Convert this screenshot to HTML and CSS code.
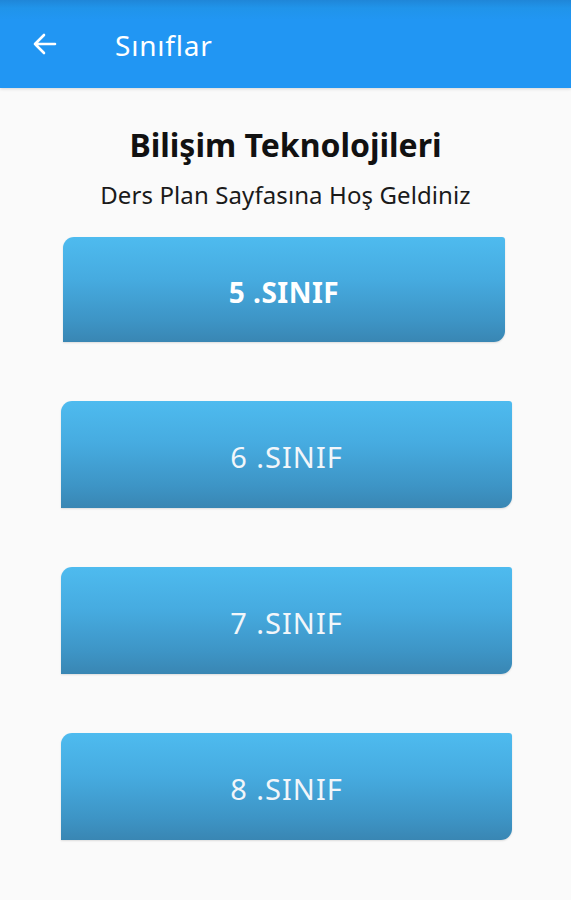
FILE: index.html
```html
<!DOCTYPE html>
<html lang="tr">
<head>
<meta charset="utf-8">
<link rel="stylesheet" href="styles.css">
</head>
<body>
<header class="appbar">
  <svg class="back" width="26" height="24" viewBox="0 0 26 24"><path d="M24 12H4M13 3L4 12l9 9" fill="none" stroke="#fff" stroke-width="2.6" stroke-linecap="round" stroke-linejoin="round"/></svg>
  <span class="appbar-title">Sınıflar</span>
</header>
<main class="content">
  <h1 class="title">Bilişim Teknolojileri</h1>
  <p class="subtitle">Ders Plan Sayfasına Hoş Geldiniz</p>
  <div class="list">
    <div class="btn btn-first">5 .SINIF</div>
    <div class="btn">6 .SINIF</div>
    <div class="btn">7 .SINIF</div>
    <div class="btn">8 .SINIF</div>
  </div>
</main>
</body>
</html>
```
FILE: styles.css
```css
html, body { margin: 0; padding: 0; }
body {
  width: 571px;
  height: 900px;
  background: #fafafa;
  font-family: "Noto Sans", "Open Sans", sans-serif;
  overflow: hidden;
}
.appbar {
  height: 88px;
  background: linear-gradient(#1f86d8 0, #2094ea 8px, #2196f3 20px, #2196f3 100%);
  display: flex;
  align-items: center;
  box-shadow: 0 1px 3px rgba(0,0,0,0.15);
}
.back { margin-left: 31px; }
.appbar-title {
  margin-left: 58px;
  color: #fff;
  font-size: 28px;
  letter-spacing: 0.8px;
  margin-top: 2px;
}
.content { display: flex; flex-direction: column; align-items: center; }
.title {
  margin: 37px 0 0;
  font-size: 32px;
  font-weight: 700;
  color: #111;
  line-height: 40px;
  letter-spacing: 0;
}
.subtitle {
  margin: 15px 0 0;
  font-size: 24px;
  color: #1a1a1a;
  line-height: 30px;
  letter-spacing: 0.1px;
}
.list {
  margin-top: 27px;
  display: flex;
  flex-direction: column;
  gap: 59px;
  align-self: stretch;
  padding-left: 61px;
}
.btn {
  width: 451px;
  height: 107px;
  box-sizing: border-box;
  padding-top: 4px;
  border-radius: 11px 3px 11px 0;
  background: linear-gradient(#4ebbef 0%, #46abe0 40%, #3d94c5 80%, #3986b3 100%);
  color: #f2f6fa;
  font-size: 29px;
  display: flex;
  align-items: center;
  justify-content: center;
  letter-spacing: 1px;
  box-shadow: 0 1px 2px rgba(0,0,0,0.12);
}
.btn-first {
  width: 442px;
  height: 105px;
  margin-left: 2px;
  font-weight: 700;
  font-size: 28px;
  letter-spacing: 0.5px;
  color: #fff;
}
```
